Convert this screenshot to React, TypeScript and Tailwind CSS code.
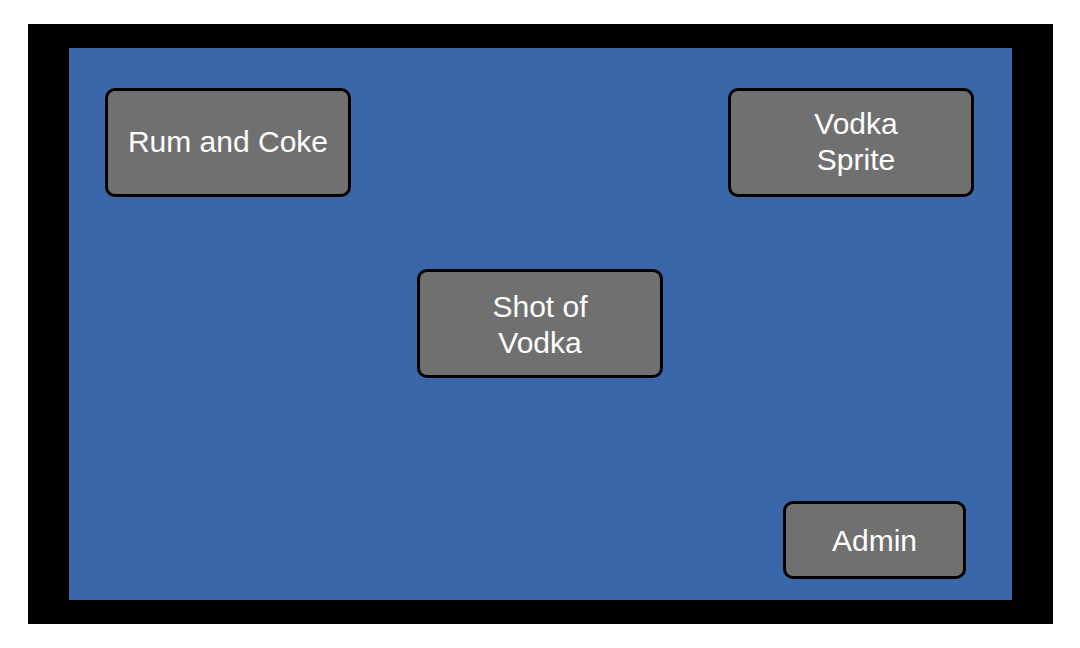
const btn =
  'flex items-center justify-center rounded-[10px] border-[3px] border-black bg-[#707070] text-center text-[30px] leading-[36px] text-white';

export default function App() {
  return (
    <div
      className="h-[648px] w-[1080px] bg-white pl-[28px] pt-[24px]"
      style={{ fontFamily: '"Liberation Sans", Arial, sans-serif' }}
    >
      <div className="h-[600px] w-[1025px] bg-black px-[41px] py-[24px]">
        <div className="flex h-[552px] w-[943px] flex-col bg-[#3a66aa] pt-[40px]">
          {/* Top row */}
          <div className="flex justify-between pl-[36px] pr-[38px]">
            <button className={`${btn} h-[109px] w-[246px] pb-[1px]`}>Rum and Coke</button>
            <button className={`${btn} h-[109px] w-[246px] pb-[1px] pl-[10px]`}>
              Vodka
              <br />
              Sprite
            </button>
          </div>

          {/* Middle */}
          <div className="mt-[72px] flex pl-[348px]">
            <button className={`${btn} h-[109px] w-[246px] pt-[2px]`}>
              Shot of
              <br />
              Vodka
            </button>
          </div>

          {/* Bottom */}
          <div className="mt-[123px] flex justify-end pr-[46px]">
            <button className={`${btn} h-[78px] w-[183px] pt-[2px]`}>Admin</button>
          </div>
        </div>
      </div>
    </div>
  );
}
